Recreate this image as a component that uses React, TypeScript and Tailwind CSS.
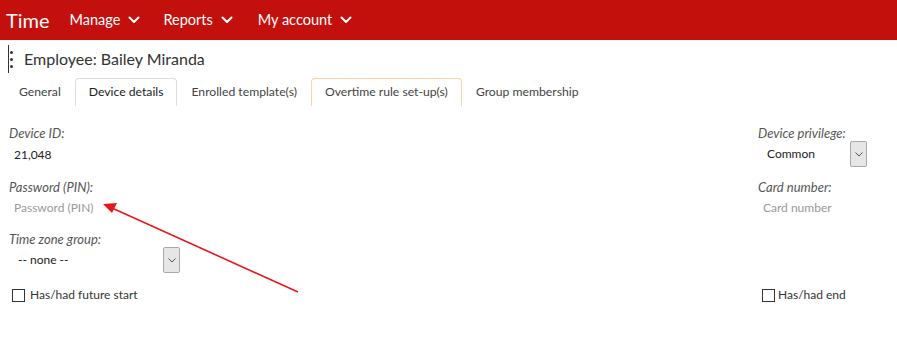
import React from 'react';

function Chevron({ className }: { className?: string }) {
    return (
        <svg className={className} width="12" height="8" viewBox="0 0 12 8" fill="none">
            <path d="M1.5 1.5 L6 6 L10.5 1.5" stroke="white" strokeWidth="2" strokeLinecap="round" strokeLinejoin="round" />
        </svg>
    );
}

function SelectButton() {
    return (
        <div className="flex h-[26px] w-[17px] items-center justify-center rounded-[2px] border border-[#a9a9a9] bg-[#e6e6e6]">
            <svg width="8" height="5" viewBox="0 0 8 5" fill="none">
                <path d="M0.5 0.5 L4 4 L7.5 0.5" stroke="#555" strokeWidth="1" />
            </svg>
        </div>
    );
}

const tabs = ['General', 'Device details', 'Enrolled template(s)', 'Overtime rule set-up(s)', 'Group membership'];

export default function App() {
    return (
        <div className="relative h-[341px] w-[897px] bg-white font-['Lato','Noto_Sans',sans-serif] text-[#333]">
            <div className="flex h-[40px] items-center bg-[#c4100d] text-white">
                <div className="pl-[6px] pr-[20px] text-[20px]">Time</div>
                <div className="flex items-center gap-[8px] pr-[23px] text-[14.5px]">Manage <Chevron /></div>
                <div className="flex items-center gap-[8px] pr-[25px] text-[14.5px]">Reports <Chevron /></div>
                <div className="flex items-center gap-[8px] text-[14.5px]">My account <Chevron /></div>
            </div>

            <div className="flex items-center pt-[5px] pl-[8px]">
                <div className="flex h-[28px] items-center border-l border-[#333] pl-[1px]">
                    <div className="flex flex-col gap-[4px]">
                        <span className="h-[3px] w-[3px] rounded-full bg-[#333]" />
                        <span className="h-[3px] w-[3px] rounded-full bg-[#333]" />
                        <span className="h-[3px] w-[3px] rounded-full bg-[#333]" />
                    </div>
                </div>
                <h1 className="pl-[11px] text-[16px] text-[#333]">Employee: Bailey Miranda</h1>
            </div>

            <div className="mt-[5px] flex h-[28px] pl-[5px] text-[12.2px]">
                {tabs.map((t, i) => (
                    <div
                        key={t}
                        className={
                            i === 1
                                ? 'flex items-center rounded-t-[4px] border border-b-0 border-[#ddd] px-[13px] text-[#222]'
                                : i === 3
                                ? 'flex items-center rounded-t-[4px] border border-b-0 border-[#fbd3a4] px-[13px] text-[#444]'
                                : 'flex items-center border border-transparent px-[13px] text-[#444]'
                        }
                    >
                        {t}
                    </div>
                ))}
            </div>

            <div className="flex justify-between pt-[19px] pl-[9px] pr-[30px] text-[12px] leading-[16px]">
                <div className="flex flex-col">
                    <div className="text-[13px] italic text-[#555]">Device ID:</div>
                    <div className="pt-[6px] pl-[5px] text-[#222]">21,048</div>
                    <div className="pt-[16px] text-[13px] italic text-[#555]">Password (PIN):</div>
                    <div className="pt-[5px] pl-[5px] text-[#999]">Password (PIN)</div>
                    <div className="pt-[15px] text-[13px] italic text-[#555]">Time zone group:</div>
                    <div className="flex items-center">
                        <span className="w-[154px] pl-[9px] text-[#222]">-- none --</span>
                        <SelectButton />
                    </div>
                    <div className="flex items-center gap-[5px] pt-[14px] pl-[3px]">
                        <span className="h-[13px] w-[13px] border border-[#333]" />
                        <span className="text-[#333]">Has/had future start</span>
                    </div>
                </div>
                <div className="flex flex-col">
                    <div className="text-[13px] italic text-[#555]">Device privilege:</div>
                    <div className="flex items-center">
                        <span className="w-[92px] pl-[9px] text-[#222]">Common</span>
                        <SelectButton />
                    </div>
                    <div className="pt-[12px] text-[13px] italic text-[#555]">Card number:</div>
                    <div className="pt-[5px] pl-[5px] text-[#999]">Card number</div>
                    <div className="flex items-center gap-[3px] pt-[71px] pl-[4px]">
                        <span className="h-[13px] w-[13px] border border-[#333]" />
                        <span className="text-[#333]">Has/had end</span>
                    </div>
                </div>
            </div>

            <svg className="absolute left-0 top-0" width="897" height="341" viewBox="0 0 897 341">
                <line x1="298" y1="292" x2="112" y2="208" stroke="#e8161b" strokeWidth="1.6" />
                <polygon points="103,204 117,203 112,213" fill="#e8161b" />
            </svg>
        </div>
    );
}
